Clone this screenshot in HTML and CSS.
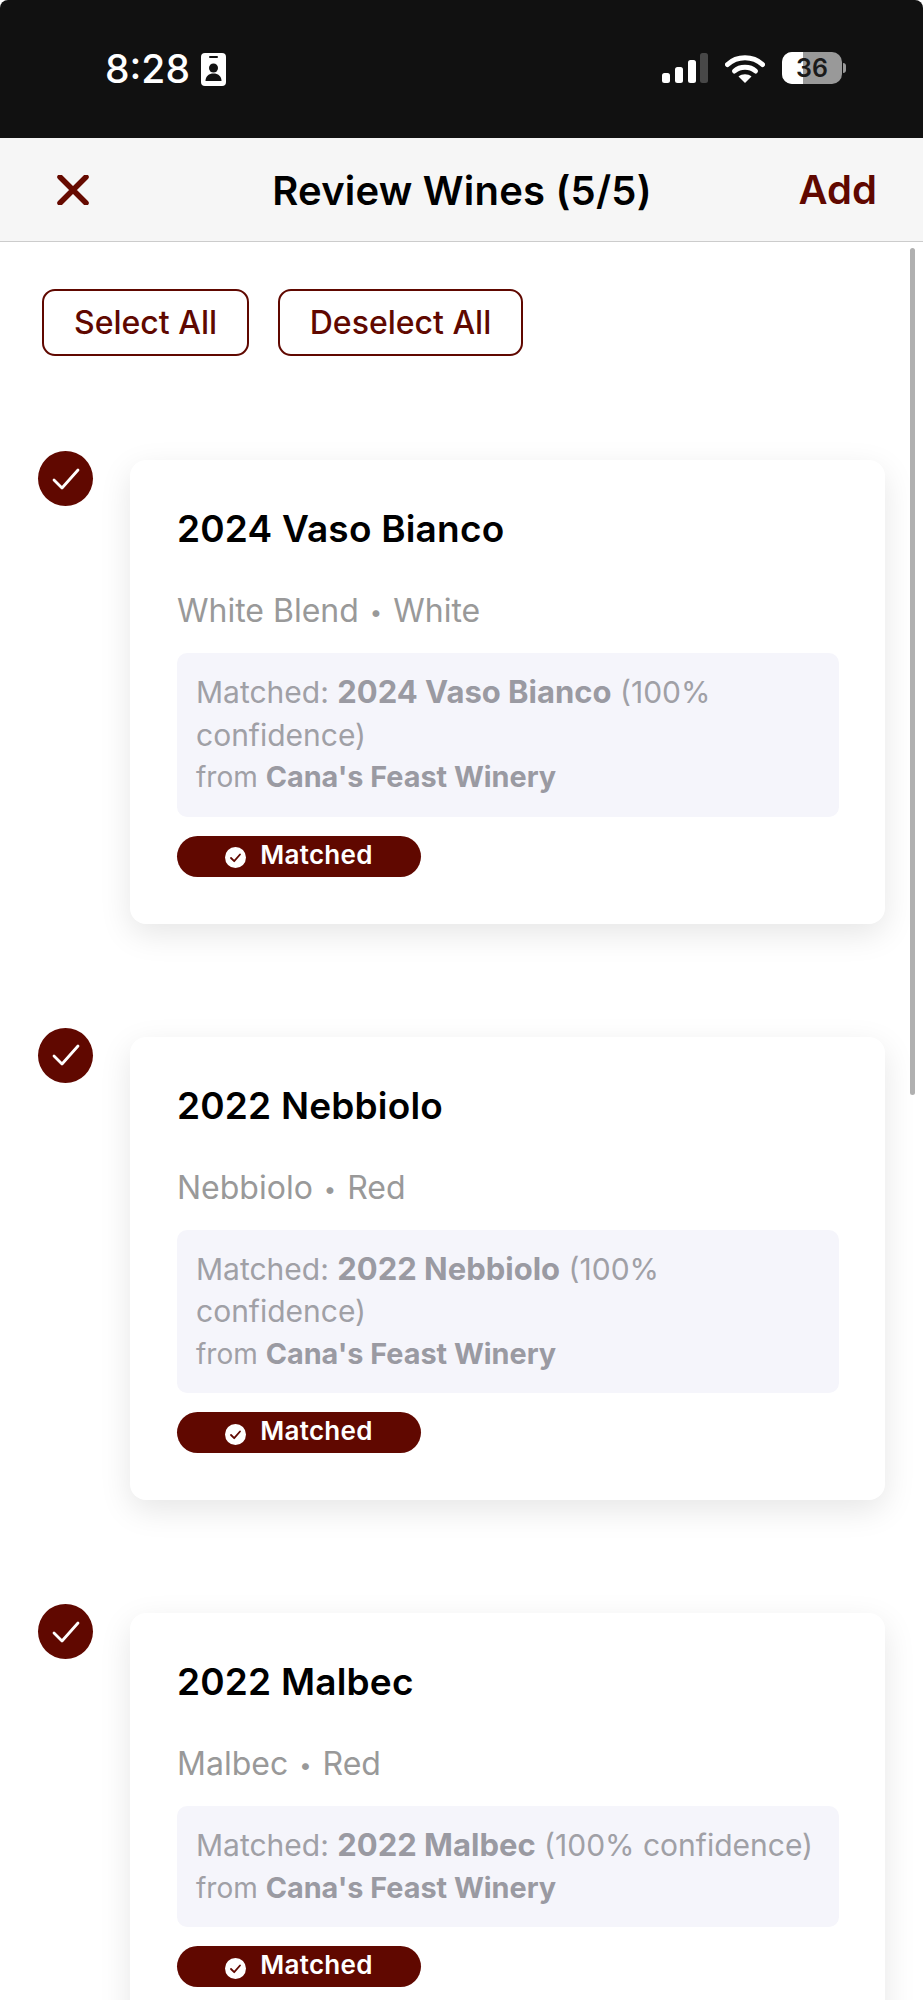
FILE: index.html
```html
<!DOCTYPE html>
<html lang="en">
<head>
<meta charset="UTF-8">
<meta name="viewport" content="width=device-width, initial-scale=1.0">
<title>Review Wines</title>
<link rel="stylesheet" href="styles.css">
</head>
<body>
    <!-- Phone status bar -->
    <div class="status-bar">
        <div class="status-left">
            <span class="time">8:28</span>
            <svg class="id-icon" width="25" height="33" viewBox="0 0 25 33">
                <rect width="25" height="33" rx="4" fill="#fff"/>
                <rect x="8" y="3" width="9" height="2" rx="1" fill="#111"/>
                <circle cx="12.500" cy="15" r="4.500" fill="#111"/>
                <path d="M4.500 28c0-5 3.500-7.500 8-7.500s8 2.500 8 7.500z" fill="#111"/>
            </svg>
        </div>
        <div class="status-right">
            <svg width="46" height="30" viewBox="0 0 46 30">
                <rect x="0" y="20" width="8" height="10" rx="2.500" fill="#fff"/>
                <rect x="13" y="14" width="8" height="16" rx="2.500" fill="#fff"/>
                <rect x="26" y="7" width="8" height="23" rx="2.500" fill="#fff"/>
                <rect x="38" y="0" width="8" height="30" rx="2.500" fill="#484848"/>
            </svg>
            <svg class="wifi" width="40" height="29" viewBox="0 0 40 29">
                <path d="M2.500 10.500C12 1.500 28 1.500 37.500 10.500" fill="none" stroke="#fff" stroke-width="5" stroke-linecap="round"/>
                <path d="M9.500 17C15 12 25 12 30.500 17" fill="none" stroke="#fff" stroke-width="5" stroke-linecap="round"/>
                <path d="M13.500 22.500C17 19.500 23 19.500 26.500 22.500L20 29z" fill="#fff"/>
            </svg>
            <div class="battery">
                <span class="battery-fill"></span>
                <span class="battery-level">36</span>
            </div>
            <span class="battery-nub"></span>
        </div>
    </div>

    <!-- Nav bar -->
    <header class="nav-bar">
        <svg class="close-icon" width="32" height="30" viewBox="0 0 32 30">
            <path d="M3 2l26 26M29 2L3 28" fill="none" stroke="#660a00" stroke-width="5.500" stroke-linecap="round"/>
        </svg>
        <h1 class="nav-title">Review Wines (5/5)</h1>
        <span class="nav-add">Add</span>
    </header>

    <main class="content">
        <div class="scroll-thumb"></div>

        <div class="actions">
            <button class="outline-btn select-all" type="button">Select All</button>
            <button class="outline-btn deselect-all" type="button">Deselect All</button>
        </div>

        <div class="wine-row">
            <span class="select-circle">
                <svg width="30" height="24" viewBox="0 0 30 24"><path d="M3 13l8 8L27 3" fill="none" stroke="#fff" stroke-width="2.800" stroke-linecap="round" stroke-linejoin="round"/></svg>
            </span>
            <section class="wine-card">
                <h2 class="wine-name">2024 Vaso Bianco</h2>
                <p class="wine-meta">White Blend <span class="dot">•</span> White</p>
                <div class="match-box">
                    <div>Matched: <b>2024 Vaso Bianco</b> (100% confidence)</div>
                    <div class="match-from">from <b>Cana's Feast Winery</b></div>
                </div>
                <span class="match-pill">
                    <svg class="pill-icon" width="21" height="21" viewBox="0 0 21 21"><circle cx="10.500" cy="10.500" r="10.500" fill="#fff"/><path d="M6 11l3.200 3.200L15 7.500" fill="none" stroke="#600800" stroke-width="1.800" stroke-linecap="round" stroke-linejoin="round"/></svg>
                    Matched
                </span>
            </section>
        </div>

        <div class="wine-row">
            <span class="select-circle">
                <svg width="30" height="24" viewBox="0 0 30 24"><path d="M3 13l8 8L27 3" fill="none" stroke="#fff" stroke-width="2.800" stroke-linecap="round" stroke-linejoin="round"/></svg>
            </span>
            <section class="wine-card">
                <h2 class="wine-name">2022 Nebbiolo</h2>
                <p class="wine-meta">Nebbiolo <span class="dot">•</span> Red</p>
                <div class="match-box">
                    <div>Matched: <b>2022 Nebbiolo</b> (100% confidence)</div>
                    <div class="match-from">from <b>Cana's Feast Winery</b></div>
                </div>
                <span class="match-pill">
                    <svg class="pill-icon" width="21" height="21" viewBox="0 0 21 21"><circle cx="10.500" cy="10.500" r="10.500" fill="#fff"/><path d="M6 11l3.200 3.200L15 7.500" fill="none" stroke="#600800" stroke-width="1.800" stroke-linecap="round" stroke-linejoin="round"/></svg>
                    Matched
                </span>
            </section>
        </div>

        <div class="wine-row">
            <span class="select-circle">
                <svg width="30" height="24" viewBox="0 0 30 24"><path d="M3 13l8 8L27 3" fill="none" stroke="#fff" stroke-width="2.800" stroke-linecap="round" stroke-linejoin="round"/></svg>
            </span>
            <section class="wine-card">
                <h2 class="wine-name">2022 Malbec</h2>
                <p class="wine-meta">Malbec <span class="dot">•</span> Red</p>
                <div class="match-box">
                    <div>Matched: <b>2022 Malbec</b> (100% confidence)</div>
                    <div class="match-from">from <b>Cana's Feast Winery</b></div>
                </div>
                <span class="match-pill">
                    <svg class="pill-icon" width="21" height="21" viewBox="0 0 21 21"><circle cx="10.500" cy="10.500" r="10.500" fill="#fff"/><path d="M6 11l3.200 3.200L15 7.500" fill="none" stroke="#600800" stroke-width="1.800" stroke-linecap="round" stroke-linejoin="round"/></svg>
                    Matched
                </span>
            </section>
        </div>
    </main>
</body>
</html>
```

FILE: styles.css
```css
* {
    box-sizing: border-box;
}

html, body {
    height: 2000px;
    overflow: hidden;
}

body {
    margin: 0;
    background-color: #fff;
    font-family: 'Inter', 'Liberation Sans', sans-serif;
}

.status-bar {
    height: 138px;
    padding: 50px 77px 0 105px;
    display: flex;
    justify-content: space-between;
    align-items: flex-start;
    background-color: #111;
    border-radius: 8px 8px 0 0;
}

.status-left {
    display: flex;
    align-items: center;
    gap: 11px;
}

.time {
    color: #fff;
    font-size: 39px;
    font-weight: 500;
    line-height: 38px;
}

.status-right {
    display: flex;
    align-items: center;
    height: 36px;
}

.wifi {
    margin-left: 17px;
}

.battery {
    position: relative;
    width: 60px;
    height: 32px;
    margin-left: 17px;
    border-radius: 10px;
    background-color: #999;
    overflow: hidden;
    text-align: center;
}

.battery-fill {
    position: absolute;
    left: 0;
    top: 0;
    width: 21px;
    height: 32px;
    background-color: #fff;
}

.battery-level {
    position: relative;
    color: #1a1a1a;
    font-size: 25px;
    font-weight: 600;
    line-height: 32px;
}

.battery-nub {
    width: 3px;
    height: 10px;
    margin-left: 1px;
    border-radius: 0 3px 3px 0;
    background-color: #999;
}

.nav-bar {
    height: 104px;
    padding: 0 46px 0 47px;
    display: grid;
    grid-template-columns: 1fr auto 1fr;
    align-items: center;
    background-color: #f6f6f6;
    border-bottom: 1px solid #ccc;
}

.close-icon {
    margin-left: 10px;
}

.nav-title {
    margin: 2px 0 0;
    color: #000;
    font-size: 40px;
    font-weight: 600;
    letter-spacing: 0.2px;
}

.nav-add {
    justify-self: end;
    color: #600800;
    font-size: 40px;
    font-weight: 600;
}

.content {
    position: relative;
    padding-top: 47px;
}

.scroll-thumb {
    position: absolute;
    top: 6px;
    right: 8px;
    width: 5px;
    height: 847px;
    border-radius: 3px;
    background-color: #b0b0b0;
}

.actions {
    display: flex;
    gap: 29px;
    padding-left: 42px;
}

.outline-btn {
    height: 67px;
    padding: 0;
    border: 2px solid #600800;
    border-radius: 13px;
    background-color: #fff;
    color: #600800;
    font-family: inherit;
    font-size: 32px;
    font-weight: 500;
}

.select-all {
    width: 207px;
}

.deselect-all {
    width: 245px;
}

.wine-row {
    display: flex;
    align-items: flex-start;
    padding-left: 38px;
    margin-top: 95px;
}

.wine-row + .wine-row {
    margin-top: 104px;
}

.select-circle {
    flex: none;
    width: 55px;
    height: 55px;
    display: flex;
    align-items: center;
    justify-content: center;
    border-radius: 50%;
    background-color: #600800;
}

.wine-card {
    width: 755px;
    margin: 9px 0 0 37px;
    padding: 47px 46px 47px 47px;
    border-radius: 16px;
    background-color: #fff;
    box-shadow: 0 10px 32px rgba(0, 0, 0, 0.1);
}

.wine-name {
    margin: 0;
    color: #000;
    font-size: 37px;
    font-weight: 600;
    letter-spacing: 0.2px;
    line-height: 44px;
}

.wine-meta {
    margin: 40px 0 0;
    color: #999;
    font-size: 32px;
    line-height: 40px;
}

.dot {
    font-size: 22px;
    vertical-align: 2px;
    margin: 0 2px;
}

.match-box {
    margin-top: 21px;
    padding: 18px 18px 18px 19px;
    border-radius: 10px;
    background-color: #f5f5fb;
    color: #a0a0a6;
    font-size: 30px;
    line-height: 42.500px;
}

.match-box b {
    color: #9a9aa2;
    font-size: 31px;
    font-weight: 700;
    line-height: 1;
}

.match-from {
    font-size: 28px;
}

.match-box .match-from b {
    font-size: 28.800px;
}

.match-pill {
    width: 244px;
    height: 41px;
    margin-top: 19px;
    padding-bottom: 4px;
    display: flex;
    align-items: center;
    justify-content: center;
    gap: 14px;
    border-radius: 21px;
    background-color: #600800;
    color: #fff;
    font-size: 26px;
    font-weight: 600;
    letter-spacing: 0.3px;
}

.pill-icon {
    margin-top: 7px;
}
```
